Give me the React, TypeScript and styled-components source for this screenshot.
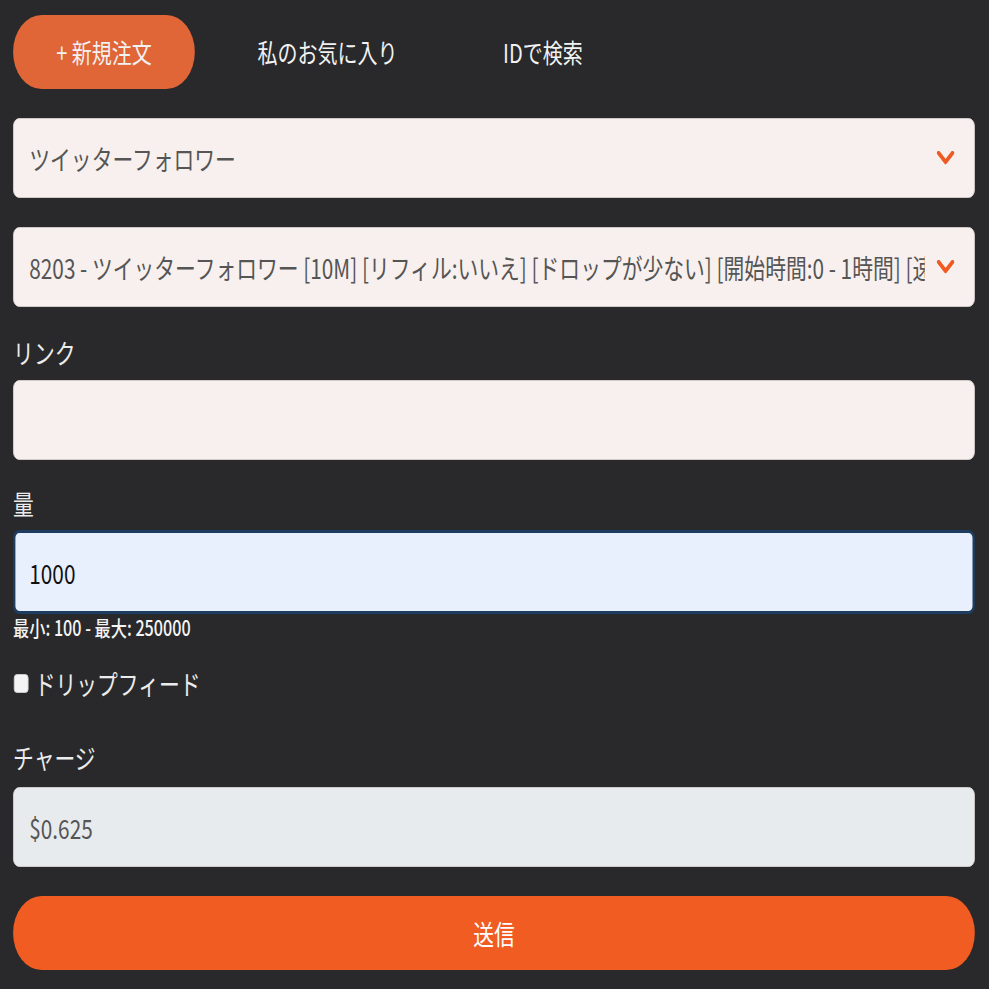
import React, { useEffect, useRef } from "react";
import styled, { createGlobalStyle } from "styled-components";

const SCALE_X = 0.77;
const BASE_WIDTH = Math.round(989 / SCALE_X);

const GlobalStyle = createGlobalStyle`
  html, body {
    margin: 0;
    padding: 0;
    background: #29292b;
    overflow: hidden;
  }
  body {
    font-family: "Noto Sans CJK JP", "Noto Sans", sans-serif;
  }
  * { box-sizing: border-box; }
`;

const Page = styled.div`
  width: ${BASE_WIDTH}px;
  min-height: 989px;
  background: #29292b;
  transform: scaleX(${SCALE_X});
  transform-origin: 0 0;
  padding: 15px 18px 0 17px;
  font-family: "Noto Sans CJK JP", "Noto Sans", sans-serif;
`;

const Tabs = styled.nav`
  display: flex;
  gap: 25px;
  margin-bottom: 29px;
`;

const Tab = styled.button<{ $active?: boolean }>`
  height: 74px;
  padding: 0 56px;
  border: none;
  border-radius: 37px;
  background: ${(p) => (p.$active ? "#e06537" : "transparent")};
  color: #f2f2f2;
  font-family: inherit;
  font-size: 26px;
  line-height: 1;
  white-space: pre;
  cursor: pointer;
`;

const Field = styled.div<{ $mb?: number }>`
  position: relative;
  margin-bottom: ${(p) => p.$mb ?? 0}px;
`;

const Select = styled.select`
  appearance: none;
  -webkit-appearance: none;
  display: block;
  width: 100%;
  height: 80px;
  padding: 0 64px 0 20px;
  border: 1px solid #d8d2d0;
  border-radius: 8px;
  background: #f8f0ee;
  color: #555;
  font-family: inherit;
  font-size: 27px;
  outline: none;
`;

const Chevron = styled.svg`
  position: absolute;
  right: 26px;
  top: 50%;
  width: 24px;
  height: 14px;
  margin-top: -7px;
  pointer-events: none;
`;

const Label = styled.label<{ $mb?: number }>`
  display: block;
  color: #ececec;
  font-size: 27px;
  line-height: 39px;
  margin-bottom: ${(p) => p.$mb ?? 8}px;
`;

const Input = styled.input<{ $variant?: "default" | "focus" | "readonly" }>`
  display: block;
  width: 100%;
  height: 80px;
  padding: 0 20px;
  border-radius: 8px;
  font-family: inherit;
  font-size: 27px;
  outline: none;
  caret-color: #111;
  border: ${(p) => (p.$variant === "focus" ? "3px solid #1d3c60" : "1px solid #d8d2d0")};
  background: ${(p) =>
    p.$variant === "focus" ? "#e8f0fe" : p.$variant === "readonly" ? "#e8ebee" : "#f8f0ee"};
  color: ${(p) => (p.$variant === "readonly" ? "#555" : "#111")};
  ${(p) => (p.$variant === "focus" ? "height: 84px; margin-top: -1px; padding-left: 18px;" : "")}
`;

const Hint = styled.div`
  color: #f4f4f4;
  font-size: 21px;
  font-weight: 500;
  line-height: 25px;
  margin-top: 1px;
`;

const CheckRow = styled.label`
  display: flex;
  align-items: center;
  gap: 8px;
  color: #ececec;
  font-size: 27px;
  line-height: 39px;
  margin-top: 24px;
  margin-bottom: 35px;
`;

const Check = styled.input`
  appearance: none;
  -webkit-appearance: none;
  width: 19px;
  height: 19px;
  margin: 0 0 0 1px;
  border-radius: 4px;
  background: #f4f4f4;
  border: 1px solid #cfcfcf;
`;

const Submit = styled.button`
  display: block;
  width: 100%;
  height: 74px;
  margin-top: 29px;
  border: none;
  border-radius: 37px;
  background: #f05c22;
  color: #fff;
  font-family: inherit;
  font-size: 27px;
  cursor: pointer;
`;

const ChevronIcon = () => (
  <Chevron viewBox="0 0 24 14">
    <polyline
      points="3,2 12,11 21,2"
      fill="none"
      stroke="#f05a22"
      strokeWidth="4.5"
      strokeLinecap="round"
      strokeLinejoin="round"
    />
  </Chevron>
);

export default function App() {
  const qtyRef = useRef<HTMLInputElement>(null);

  useEffect(() => {
    const el = qtyRef.current;
    if (el) {
      el.focus();
      const len = el.value.length;
      el.setSelectionRange(len, len);
    }
  }, []);

  return (
    <>
      <GlobalStyle />
      <Page>
        <Tabs>
          <Tab $active>+ 新規注文</Tab>
          <Tab>私のお気に入り</Tab>
          <Tab>IDで検索</Tab>
        </Tabs>

        <Field $mb={29}>
          <Select defaultValue="tw">
            <option value="tw">ツイッターフォロワー</option>
          </Select>
          <ChevronIcon />
        </Field>

        <Field $mb={26}>
          <Select defaultValue="8203">
            <option value="8203">
              8203 - ツイッターフォロワー [10M] [リフィル:いいえ] [ドロップが少ない] [開始時間:0 - 1時間] [速度:1日あたり100K]
            </option>
          </Select>
          <ChevronIcon />
        </Field>

        <Field $mb={24}>
          <Label>リンク</Label>
          <Input type="text" />
        </Field>

        <Field>
          <Label>量</Label>
          <Input ref={qtyRef} type="text" $variant="focus" defaultValue="1000" />
          <Hint>最小: 100 - 最大: 250000</Hint>
        </Field>

        <CheckRow>
          <Check type="checkbox" />
          ドリップフィード
        </CheckRow>

        <Field>
          <Label $mb={10}>チャージ</Label>
          <Input type="text" $variant="readonly" value="$0.625" readOnly />
        </Field>

        <Submit type="button">送信</Submit>
      </Page>
    </>
  );
}
